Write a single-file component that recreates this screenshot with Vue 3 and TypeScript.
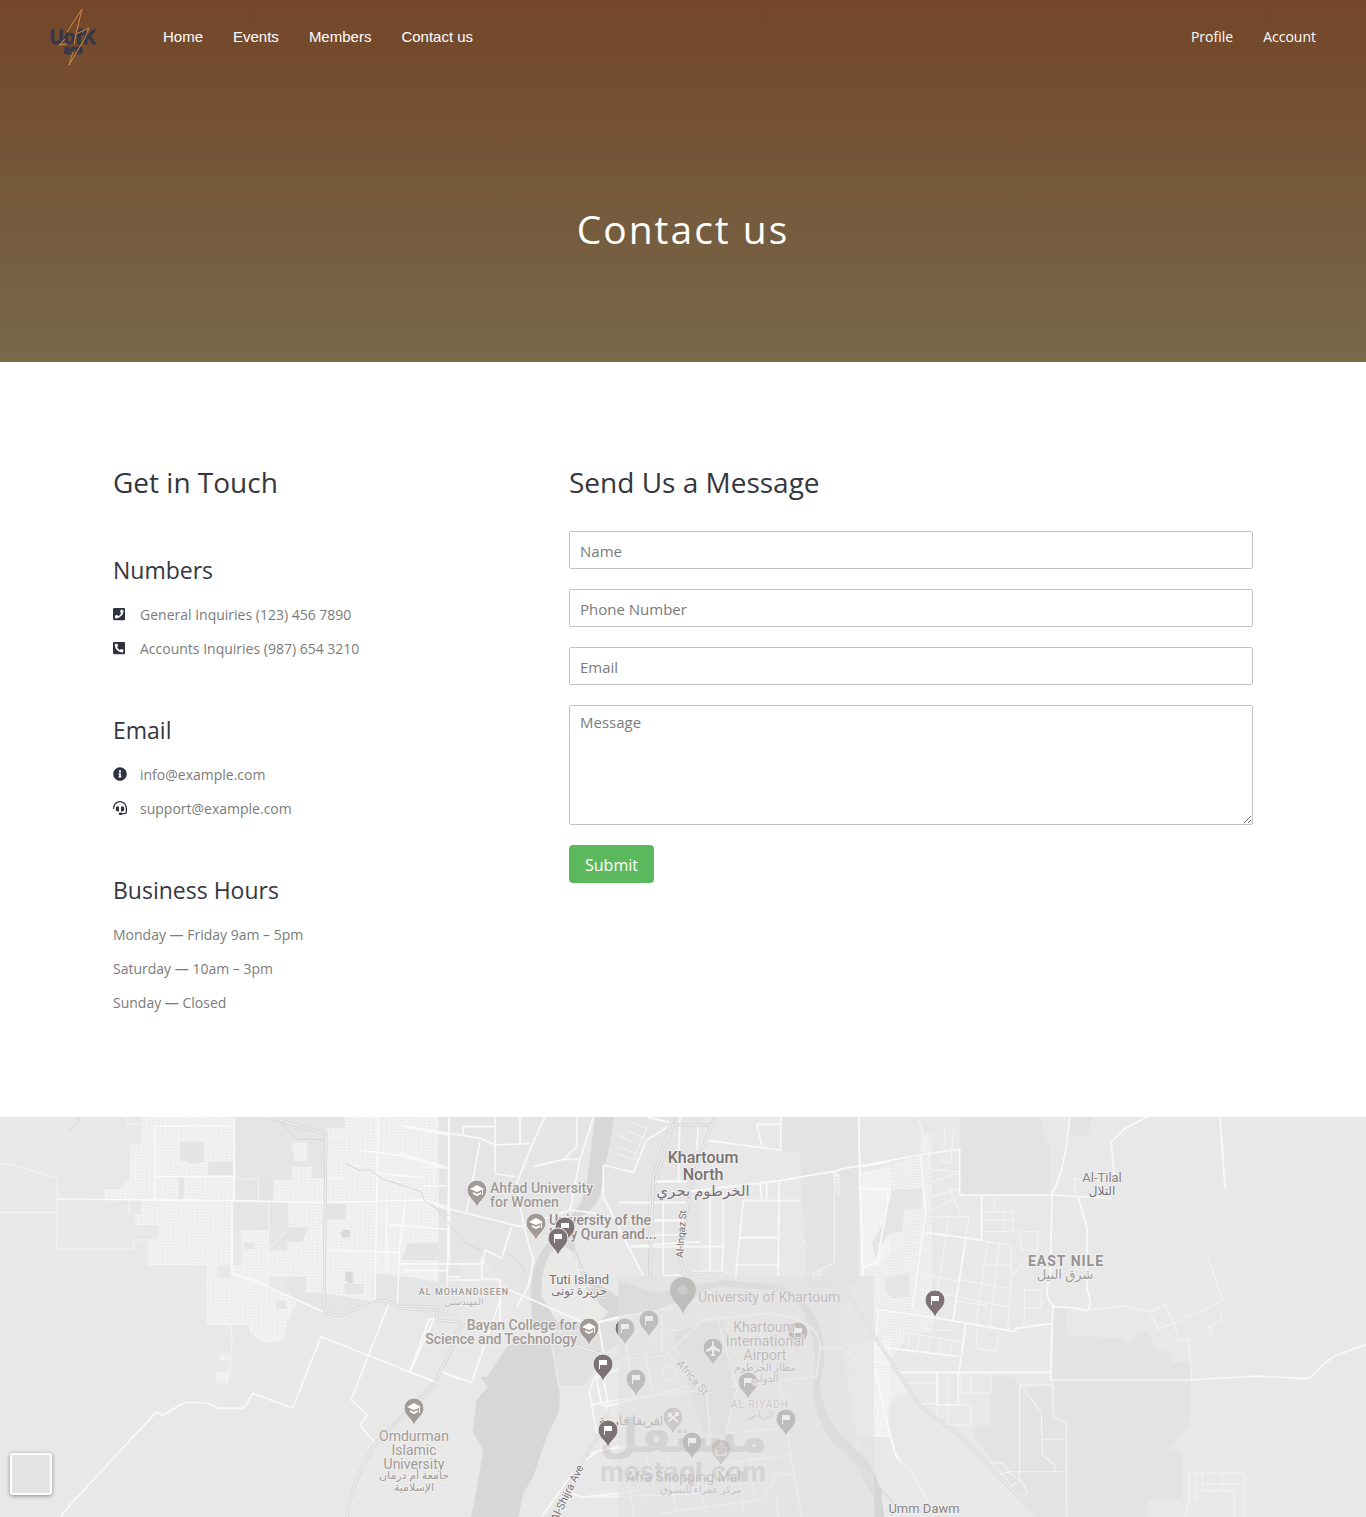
<script setup lang="ts">
import { ref } from 'vue'

interface NavLink { label: string; href: string }
interface ContactLine { icon?: 'phone' | 'phoneAlt' | 'info' | 'headset'; text: string }
interface ContactGroup { title: string; lines: ContactLine[] }
interface Pin { x: number; y: number; kind: 'grad' | 'flag' | 'plane' | 'dining' | 'shop'; color: string }
interface MapLabel {
  text: string; x: number; y: number; size: number; color: string
  anchor?: 'start' | 'middle' | 'end'; weight?: number; rotate?: number; spacing?: number
}

const mainLinks: NavLink[] = [
  { label: 'Home', href: '#home' },
  { label: 'Events', href: '#events' },
  { label: 'Members', href: '#members' },
  { label: 'Contact us', href: '#contact' },
]
const userLinks: NavLink[] = [
  { label: 'Profile', href: '#profile' },
  { label: 'Account', href: '#account' },
]

const groups: ContactGroup[] = [
  {
    title: 'Numbers',
    lines: [
      { icon: 'phone', text: 'General Inquiries (123) 456 7890' },
      { icon: 'phoneAlt', text: 'Accounts Inquiries (987) 654 3210' },
    ],
  },
  {
    title: 'Email',
    lines: [
      { icon: 'info', text: 'info@example.com' },
      { icon: 'headset', text: 'support@example.com' },
    ],
  },
  {
    title: 'Business Hours',
    lines: [
      { text: 'Monday — Friday 9am – 5pm' },
      { text: 'Saturday — 10am – 3pm' },
      { text: 'Sunday — Closed' },
    ],
  },
]

const name = ref('')
const phone = ref('')
const email = ref('')
const message = ref('')

const GRAD = '#a19a96'
const DARK = '#7d7374'

// Pins and labels below the translucent service area overlay
const mutedPins: Pin[] = [
  { x: 625, y: 202, kind: 'flag', color: DARK },
  { x: 649, y: 194, kind: 'flag', color: DARK },
  { x: 636, y: 253, kind: 'flag', color: DARK },
  { x: 692, y: 316, kind: 'flag', color: DARK },
  { x: 786, y: 293, kind: 'flag', color: DARK },
  { x: 798, y: 206, kind: 'flag', color: DARK },
  { x: 748, y: 256, kind: 'flag', color: DARK },
  { x: 713, y: 222, kind: 'plane', color: DARK },
  { x: 673, y: 291, kind: 'dining', color: GRAD },
  { x: 721, y: 323, kind: 'shop', color: GRAD },
]
const pins: Pin[] = [
  { x: 477, y: 64, kind: 'grad', color: GRAD },
  { x: 536, y: 97, kind: 'grad', color: GRAD },
  { x: 589, y: 202, kind: 'grad', color: GRAD },
  { x: 414, y: 282, kind: 'grad', color: GRAD },
  { x: 565, y: 101, kind: 'flag', color: DARK },
  { x: 558, y: 112, kind: 'flag', color: DARK },
  { x: 603, y: 238, kind: 'flag', color: DARK },
  { x: 608, y: 304, kind: 'flag', color: DARK },
  { x: 935, y: 174, kind: 'flag', color: DARK },
]

const mutedLabels: MapLabel[] = [
  { text: 'University of Khartoum', x: 698, y: 185, size: 14, color: DARK },
  { text: 'Khartoum', x: 764, y: 215, size: 14, color: DARK, anchor: 'middle' },
  { text: 'International', x: 765, y: 229, size: 14, color: DARK, anchor: 'middle' },
  { text: 'Airport', x: 765, y: 243, size: 14, color: DARK, anchor: 'middle' },
  { text: 'مطار الخرطوم', x: 765, y: 254, size: 10, color: DARK, anchor: 'middle' },
  { text: 'الدولي', x: 765, y: 265, size: 10, color: DARK, anchor: 'middle' },
  { text: 'Africa St', x: 676, y: 247, size: 11, color: DARK, rotate: 49 },
  { text: 'AL RIYADH', x: 760, y: 291, size: 10, color: GRAD, anchor: 'middle', spacing: 1 },
  { text: 'الرياض', x: 760, y: 301, size: 9, color: GRAD, anchor: 'middle' },
  { text: 'افريقا فارمة', x: 631, y: 308, size: 13, color: DARK, anchor: 'middle' },
  { text: 'Afra Shopping Mall', x: 685, y: 365, size: 14, color: '#8d8583', anchor: 'middle' },
  { text: 'مركز عفراء للتسوق', x: 701, y: 376, size: 10, color: '#8d8583', anchor: 'middle' },
]
const labels: MapLabel[] = [
  { text: 'Khartoum', x: 703, y: 46, size: 16, color: '#787071', anchor: 'middle', weight: 500 },
  { text: 'North', x: 703, y: 63, size: 16, color: '#787071', anchor: 'middle', weight: 500 },
  { text: 'الخرطوم بحري', x: 703, y: 79, size: 15, color: '#787071', anchor: 'middle' },
  { text: 'Ahfad University', x: 490, y: 76, size: 14, color: GRAD, weight: 500 },
  { text: 'for Women', x: 490, y: 90, size: 14, color: GRAD, weight: 500 },
  { text: 'University of the', x: 549, y: 108, size: 14, color: '#938b88', weight: 500 },
  { text: 'Holy Quran and...', x: 549, y: 122, size: 14, color: '#938b88', weight: 500 },
  { text: 'Tuti Island', x: 579, y: 167, size: 13, color: '#787071', anchor: 'middle' },
  { text: 'جزيرة توتى', x: 579, y: 178, size: 12, color: '#787071', anchor: 'middle' },
  { text: 'AL MOHANDISEEN', x: 464, y: 178, size: 9, color: GRAD, anchor: 'middle', weight: 500, spacing: 1 },
  { text: 'المهندسين', x: 464, y: 188, size: 9, color: '#b5afac', anchor: 'middle' },
  { text: 'Bayan College for', x: 577, y: 213, size: 14, color: GRAD, anchor: 'end', weight: 500 },
  { text: 'Science and Technology', x: 577, y: 227, size: 14, color: GRAD, anchor: 'end', weight: 500 },
  { text: 'Omdurman', x: 414, y: 324, size: 14, color: GRAD, anchor: 'middle' },
  { text: 'Islamic', x: 414, y: 338, size: 14, color: GRAD, anchor: 'middle' },
  { text: 'University', x: 414, y: 352, size: 14, color: GRAD, anchor: 'middle' },
  { text: 'جامعة أم درمان', x: 414, y: 362, size: 11, color: GRAD, anchor: 'middle' },
  { text: 'الإسلامية', x: 414, y: 374, size: 11, color: GRAD, anchor: 'middle' },
  { text: 'Al-Inqaz St', x: 683, y: 141, size: 10, color: '#787071', rotate: -86 },
  { text: 'Al-Shijra Ave', x: 557, y: 405, size: 11, color: '#787071', rotate: -64 },
  { text: 'EAST NILE', x: 1066, y: 149, size: 14, color: '#989192', anchor: 'middle', weight: 700, spacing: 1 },
  { text: 'شرق النيل', x: 1065, y: 162, size: 13, color: GRAD, anchor: 'middle' },
  { text: 'Al-Tilal', x: 1102, y: 65, size: 13, color: '#8a8283', anchor: 'middle' },
  { text: 'التلال', x: 1102, y: 78, size: 12, color: '#787071', anchor: 'middle' },
  { text: 'Umm Dawm', x: 924, y: 396, size: 13, color: '#8a8283', anchor: 'middle' },
]
</script>

<template>
  <div class="page">
    <header class="hero">
      <nav class="nav" aria-label="Main">
        <a class="logo" href="#home" aria-label="UofK home">
          <svg viewBox="0 0 60 74" width="60" height="74">
            <g class="logo-text">
              <text x="30" y="44" font-size="19" text-anchor="middle">UofK</text>
              <text x="30" y="54" font-size="12" text-anchor="middle">are</text>
            </g>
            <path d="M39 9L24 32M39 9L33 34L46 28L42 38L26 65L30 52M24 44L16 45L22 39M33 34L31 44" fill="none" stroke="#cf8d43" stroke-width="1" />
          </svg>
        </a>
        <ul class="links">
          <li v-for="l in mainLinks" :key="l.label"><a :href="l.href">{{ l.label }}</a></li>
        </ul>
        <ul class="links user">
          <li v-for="l in userLinks" :key="l.label"><a :href="l.href">{{ l.label }}</a></li>
        </ul>
      </nav>
      <h1>Contact us</h1>
    </header>

    <main class="content">
      <section>
        <h2>Get in Touch</h2>
        <div class="groups">
          <div v-for="g in groups" :key="g.title">
            <h3>{{ g.title }}</h3>
            <ul class="lines">
              <li v-for="line in g.lines" :key="line.text">
                <span v-if="line.icon" class="icon">
                  <svg v-if="line.icon === 'phone'" viewBox="0 0 448 512" height="14"><path d="M400 32H48C21.49 32 0 53.49 0 80v352c0 26.51 21.49 48 48 48h352c26.51 0 48-21.49 48-48V80c0-26.51-21.49-48-48-48zM94 416c-7.033 0-13.057-4.873-14.616-11.627l-14.998-65a15 15 0 0 1 8.707-17.16l69.998-29.999a15 15 0 0 1 17.518 4.289l30.997 37.885c48.944-22.963 88.297-62.858 110.781-110.78l-37.886-30.997a15.001 15.001 0 0 1-4.289-17.518l30-69.998a15 15 0 0 1 17.16-8.707l65 14.998A14.997 14.997 0 0 1 384 126c0 160.292-129.945 290-290 290z" /></svg>
                  <svg v-else-if="line.icon === 'phoneAlt'" viewBox="0 0 448 512" height="14"><path d="M400 32H48A48 48 0 0 0 0 80v352a48 48 0 0 0 48 48h352a48 48 0 0 0 48-48V80a48 48 0 0 0-48-48zm-16.39 307.37l-15 65A15 15 0 0 1 354 416C194 416 64 286.29 64 126a15.7 15.7 0 0 1 11.63-14.61l65-15A18.23 18.23 0 0 1 144 96a16.27 16.27 0 0 1 13.79 9.09l30 70A17.9 17.9 0 0 1 189 181a17 17 0 0 1-5.5 11.61l-37.89 31a231.91 231.91 0 0 0 110.78 110.78l31-37.89A17 17 0 0 1 299 291a17.85 17.85 0 0 1 5.91 1.21l70 30A16.25 16.25 0 0 1 384 336a17.41 17.41 0 0 1-.39 3.37z" /></svg>
                  <svg v-else-if="line.icon === 'info'" viewBox="0 0 512 512" height="14"><path d="M256 8C119.043 8 8 119.083 8 256c0 136.997 111.043 248 248 248s248-111.003 248-248C504 119.083 392.957 8 256 8zm0 110c23.196 0 42 18.804 42 42s-18.804 42-42 42-42-18.804-42-42 18.804-42 42-42zm56 254c0 6.627-5.373 12-12 12h-88c-6.627 0-12-5.373-12-12v-24c0-6.627 5.373-12 12-12h12v-64h-12c-6.627 0-12-5.373-12-12v-24c0-6.627 5.373-12 12-12h64c6.627 0 12 5.373 12 12v100h12c6.627 0 12 5.373 12 12v24z" /></svg>
                  <svg v-else viewBox="0 0 512 512" height="14">
                    <path d="M24 272V256A232 232 0 0 1 488 256V400Q488 464 424 464H300" fill="none" stroke="currentColor" stroke-width="48" stroke-linecap="round" />
                    <path d="M192 192h-16c-44 0-72 28-72 64v64c0 36 28 64 72 64h16c18 0 28-14 28-32V224c0-18-10-32-28-32zM336 384c44 0 72-28 72-64v-64c0-36-28-64-72-64h-16c-18 0-28 14-28 32v128c0 18 10 32 28 32z" />
                    <rect x="208" y="416" width="128" height="96" rx="48" />
                  </svg>
                </span>
                <span>{{ line.text }}</span>
              </li>
            </ul>
          </div>
        </div>
      </section>

      <section>
        <h2>Send Us a Message</h2>
        <form @submit.prevent>
          <input v-model="name" type="text" placeholder="Name" aria-label="Name" />
          <input v-model="phone" type="tel" placeholder="Phone Number" aria-label="Phone Number" />
          <input v-model="email" type="email" placeholder="Email" aria-label="Email" />
          <textarea v-model="message" placeholder="Message" aria-label="Message"></textarea>
          <button class="submit" type="submit">Submit</button>
        </form>
      </section>
    </main>

    <section class="map" aria-label="Map">
      <svg class="map-art" viewBox="0 0 1366 400" preserveAspectRatio="xMidYMid slice">
        <defs>
          <pattern id="blocks" width="14" height="9" patternUnits="userSpaceOnUse" patternTransform="rotate(2)">
            <path d="M0 4H14M7 0V9" stroke="#fafafa" stroke-width="4" opacity=".55" />
          </pattern>
          <pattern id="dense" width="10" height="8" patternUnits="userSpaceOnUse" patternTransform="rotate(4)">
            <path d="M0 4H10M5 0V8" stroke="#fafafa" stroke-width="3" opacity=".6" />
          </pattern>
          <g id="pin">
            <path d="M0 27 C-2 19 -10 17 -10 9 A10 10 0 0 1 10 9 C10 17 2 19 0 27Z" stroke="#f1f1f1" stroke-width="1" />
          </g>
        </defs>

        <g transform="scale(.33333)">
          <rect width="4098" height="1200" fill="#e8e8e8" />

          <!-- west bank -->
          <g transform="translate(0 -21)">
            <path d="M705 21H975V600L885 575L806 420V362H700V270H705ZM1120 490H1345V590H1190L1120 570ZM980 21H1380V620H1310L1200 590L1120 570L975 620Z" fill="#e5e5e5" />
            <path d="M426 21H703V270H696V466H445V390H474V345H405V312H425V270H313V238H360L390 205V103H426ZM725 360H804V422H862V396H905V352H865V275H820V210H875V170H935V205H972V548H918V500H806V530L890 575L862 640L850 690L800 695L752 672L745 646H622V466H650V504H692V466H725ZM871 98H922V153H885ZM980 55H1034V21H1316V516L1220 500L1120 490V575L975 550ZM648 785H686V820H648ZM657 730H690V750H657Z" fill="#ebebeb" />
            <path d="M426 21H703V270H696V466H445V390H474V345H405V312H425V270H313V238H360L390 205V103H426ZM725 360H804V422H862V396H905V352H865V275H820V210H875V170H935V205H972V548H918V500H806V530L890 575L862 640L850 690L800 695L752 672L745 646H622V466H650V504H692V466H725ZM871 98H922V153H885ZM980 55H1034V21H1316V516L1220 500L1120 490V575L975 550ZM648 785H686V820H648ZM657 730H690V750H657Z" fill="url(#blocks)" />
            <path d="M540 95H612V155L575 162L540 150ZM535 198H552V267H535ZM732 398H764V417H732ZM866 355L925 352L905 396H862L830 400ZM980 280H1037V328H980ZM1034 522H1090V552H1034ZM785 212H816V270H785ZM828 572H858V596H828ZM625 155H700V196H625ZM1225 400H1316V450H1205Z" fill="#e4e4e4" />
            <path d="M1036 485H1058V520H1045L1036 510ZM1020 370L1036 358L1050 362V382L1030 384Z" fill="#d9d9d9" />
            <path d="M0 160L40 165L172 205V345L169 418H401V390H474M0 308H169M383 21V43H426M703 200L725 207L775 208M775 208V270M806 275V420M806 418L870 355M700 498L780 520M692 646L697 690L687 800M750 650Q755 690 820 696Q850 690 852 660M388 270V312M445 390V463H622M622 466V642H745M984 80H1034" class="thin" />
            <path d="M172 267L696 272L980 278L1270 270L1380 300M703 21V272M696 272V490M465 48V268M465 48H703M465 199L703 200M696 490L760 510L970 605M1134 21L1125 570M1348 21L1342 535M980 205H1034M980 420L1200 428M1080 122L1180 132L1340 175M1215 50L1380 82M1216 270L1198 430L1192 585M1160 278V480M1165 343L1340 358M1198 462H1380M1205 482H1342M1134 190L1270 203M1270 228H1340M1342 255L1380 262M1342 500H1380M1165 585L1053 870L1102 915L1080 945L1127 1000M963 680L1305 815M963 680L878 894L758 850Q735 895 725 895H655L630 882Q560 870 540 885L486 917L470 905L210 1185L182 1221M1305 628H1288L1230 782M1323 785L1380 808" class="road" />
            <path d="M207 62Q240 40 237 21M1036 160L1075 180H1110L1150 208L1230 233L1262 245L1275 275L1350 320L1380 360M840 35L890 88H975" class="river" />
            <path d="M805 21L978 72L972 600Q1010 630 1045 605L1140 572Q1165 570 1190 588L1310 592V630L1380 636L1350 730L1305 815L1180 945L1127 1000Q1060 1100 1040 1221" class="hw" />
            <path d="M805 21L978 72L972 600Q1010 630 1045 605L1140 572Q1165 570 1190 588L1310 592V630L1380 636L1350 730L1305 815L1180 945L1127 1000Q1060 1100 1040 1221" class="hw-in" />
          </g>

          <!-- river confluence -->
          <g transform="translate(1200 -21)">
            <path d="M148 21H580L510 300L390 450L395 560L330 540L250 440L148 455ZM640 21H900V500H730L610 260V160Z" fill="#e5e5e5" />
            <path d="M585 21H642Q630 110 615 165L600 260Q575 310 535 320Q510 390 535 440Q560 510 610 530L655 560V620L560 660H400Q385 540 402 475Q410 440 450 390L510 320Q550 285 560 220Z" fill="#d7d7d7" />
            <path d="M455 425Q495 395 520 430L570 560L625 605L600 635H470L425 560Q420 470 455 425Z" fill="#e9e9e7" />
            <path d="M520 420L560 520L600 590M530 450L545 560L590 600M540 480H560M545 530H580" class="thin" />
            <path d="M148 21V460M0 45L240 85L285 105L390 100M190 50H285M190 50V75M285 21V190M240 95L200 305M435 21Q400 90 370 170L350 220L370 345L400 450L385 530L350 590M360 21V100M490 148L530 110V21M580 21L540 150L510 300M400 170L490 148H535M285 192L345 200M0 130L140 172H60M100 285L360 350L510 300L590 310M0 462H250L255 420L305 445L335 350M245 440L245 505L300 510V660M330 540L600 660M148 510H245M610 165L705 188M610 165V260L730 498M700 188L740 90L820 40L740 21M655 278H760M755 213H840M755 330H850M690 408L900 395M790 498L840 495" class="road" />
            <path d="M100 285L170 370Q200 410 245 420M320 430Q350 440 380 490" class="river" />
            <path d="M825 21L750 270V500M0 595L110 600" class="hw" />
            <path d="M825 21L750 270V500M0 595L110 600" class="hw-in" />
            <path d="M650 75L700 95M680 60L735 85M655 110L710 130M700 40L740 55L700 150L650 130" class="thin" />
          </g>

          <!-- white nile -->
          <g transform="translate(1200 549)">
            <path d="M320 140L410 110L452 130L480 290L475 340L440 410L400 530L370 580L355 651H213L230 570L250 450L218 395L230 300L262 262L242 230H262Z" fill="#d7d7d7" />
            <path d="M450 100L660 60V130L610 160L555 255L480 255Z" fill="#e0e0e0" />
            <path d="M300 0L280 60L215 248L122 213M0 205L105 245M100 60L32 212M595 65L615 185L580 240L568 275L590 400M590 235L605 315H625L610 235M615 320L900 250M590 235L660 205M600 65L900 0M540 490L600 450L700 440M505 575L545 592L700 575L760 500M540 490L425 651M620 320V345" class="road" />
            <path d="M0 360L100 260L190 70M500 130L670 180L820 160L900 250M625 330L600 400L500 560L450 651" class="hw" />
            <path d="M0 360L100 260L190 70M500 130L670 180L820 160L900 250M625 330L600 400L500 560L450 651" class="hw-in" />
          </g>

          <!-- khartoum north -->
          <g transform="translate(1770 -21)">
            <path d="M575 21H805V520H650L630 130L575 120Z" fill="#e3e3e3" />
            <path d="M730 190L775 230L770 265L740 255ZM815 185L900 175V430L870 465L818 475ZM665 490L700 478L695 510H665Z" fill="url(#dense)" />
            <path d="M355 92L572 120V21M500 43H572M500 43L515 105M270 21L265 215M325 50L320 120M195 215H290M120 278H290M220 280V495M190 332H290M190 375H270M120 410H400M400 245V410L395 500M360 250V500M290 245L570 212L900 155M567 212L565 500M460 272H630M460 272L435 520M510 220L515 270M530 215V268M450 383H565M443 465H565M805 21L808 170L818 500M725 185L810 238H900M818 475L865 455L895 300L890 240M270 500L310 485H400L435 520" class="road" />
            <path d="M733 195V460L665 490M640 385L650 410" class="thin" />
            <path d="M250 21L190 200L180 520M375 21L345 95L300 240L270 440L285 500M250 45H365M150 500L200 530L205 620M280 490H400L440 525L720 525L850 500" class="hw" />
            <path d="M250 21L190 200L180 520M375 21L345 95L300 240L270 440L285 500M250 45H365M150 500L200 530L205 620M280 490H400L440 525L720 525L850 500" class="hw-in" />
          </g>

          <!-- city centre and blue nile -->
          <g transform="translate(1770 549)">
            <path d="M85 -60L200 -20L400 -60L560 -45Q650 -20 690 80Q715 180 690 240Q690 320 740 390L830 480Q870 530 882 651H862Q855 560 800 490L720 420Q660 320 672 240Q685 140 650 60Q620 -20 540 -30L380 -40L200 30L85 50Z" fill="#d0d0d0" />
            <path d="M250 100L330 70L400 60L440 270L400 400H340Z" fill="#dcdcdc" />
            <path d="M780 120H900V410H800L780 300ZM800 420L830 460L780 440Z" fill="url(#blocks)" />
            <path d="M0 75L85 50L280 20M105 100L130 300M165 150L190 290M85 180L230 165L340 60L540 40Q690 60 690 140L680 230L420 260M235 165L350 280L360 400M0 315L80 300L340 270M385 60L440 270L410 390M410 400L560 385M570 250L600 450L635 651M400 490L600 465M85 590L340 580L390 480M0 590H85M210 640L420 610L520 600L560 520L610 525M690 145H760L800 180L900 190M110 480L130 651M170 470L190 560M230 460L260 640M300 450L350 640M440 480L460 640M480 470L495 600M0 460L80 440H360M215 40V160M225 90H270M560 580L565 651M240 200a22 22 0 1 0 1 0M190 270V290" class="road" />
          </g>

          <!-- east nile -->
          <g transform="translate(2520 -21) scale(1.0064 1)">
            <path d="M0 21H55V495H0ZM357 21H595L627 120V255H357ZM680 21H753L740 75L680 82ZM635 590H670L680 675L835 685L860 705L880 670L920 668L935 710L985 730L990 757H1045V810L1040 950L980 1018L1018 1025V1168H920V1221H680L675 940L635 920ZM450 800H520L540 840L627 825L635 920L675 940V1221H590L400 980V950H450Z" fill="#e3e3e3" />
            <path d="M68 190L195 150L240 137V70H272L275 670L205 660L180 715L140 770L180 780L205 850L165 860L135 905L150 980H100L50 970L30 880L10 720L0 600L60 500L65 240Z" fill="url(#dense)" />
            <path d="M152 240L245 235V290L190 300L185 365L150 370L125 400L110 460L95 400L130 340ZM140 500L208 488V560L160 565L135 545Z" fill="#e5e5e5" />
            <path d="M232 21L250 80V130M310 45L315 100L300 120M340 45L330 160L300 150M270 180L357 185M275 215L350 190M275 260L357 235M270 305L370 250M275 320L385 320M325 235L360 315M385 320L375 380M420 305H515V365H425M460 255V305M490 305V360M425 330H515M325 320L275 640M375 385L510 405M440 395L405 640M475 400L445 660M510 405V500L500 660M535 365H590V420H540ZM415 465H510M360 510L500 535M270 495L355 515M280 545L500 590M350 575L440 585M410 650L405 715L465 725L475 665M510 500L555 450H600M550 540H600V595H550ZM550 600L548 650M180 655L175 715M210 665L200 720M240 670L230 725M270 680L260 730M300 690L295 735M335 695L325 738M290 660H330M180 665L360 695M190 820H290V880L230 883M290 790V925M322 795V945M322 885H390V945H322M362 795V850H450V795M390 800V850M535 825L600 905L603 1035L640 1065V1085M535 825H630M535 825V1110L500 1085H675M603 988H670M635 810V920L675 940V1221M1095 437L1142 572L995 640L948 657L922 605L970 585L995 640L1010 690H1040L1048 810M740 600L850 587L922 605M1040 1090H1205V1221M1040 1090V1168H1062V1090M1080 1090V1142H1175V1221M1140 1090V1142M1080 1122H1200M1040 1168L1030 1221M700 205V250M720 210L700 205M1080 665L1070 670M1135 610L1138 630L1100 650L1110 675M445 1060L485 1058L505 1085L470 1095M510 1130L540 1110L560 1150L540 1160M135 905L165 1040L220 1095L270 1190" class="thin" />
            <path d="M55 21L68 470L110 455L150 240M0 178L240 135L357 117V255H630L810 265M240 135L255 310L215 600M60 237H150M685 21Q670 190 632 250L627 500Q605 560 635 585L627 810H1045L1240 798L1370 805H1400Q1460 740 1490 732L1578 700M915 21L850 55L808 97L818 195M1133 21L1148 235M710 262L737 355V540Q755 590 735 602Q690 590 635 590M255 367L422 390V255M375 385L337 630M102 597L265 620L520 665L525 655L635 640M375 640L355 787M110 710L355 740M175 787H627M290 790V885H353V787M150 980L100 760L115 600M100 978H150L165 1030L180 1055" class="road" />
            <path d="M115 1130L155 1175V1221" class="river" />
            <path d="M0 520L60 610L110 690L240 890L360 980L590 1221" class="hw" />
            <path d="M0 520L60 610L110 690L240 890L360 980L590 1221" class="hw-in" />
            <path d="M0 985L60 1060L105 1110L125 1140V1221H102V1170L50 1070L0 1010Z" fill="#d6d6d6" />
          </g>
        </g>

        <g>
          <path d="M683 197 C680 187 670 183 670 173 A13 13 0 0 1 696 173 C696 183 686 187 683 197Z" :fill="DARK" />
          <circle cx="683" cy="173" r="5" fill="#a09899" />
          <g v-for="p in mutedPins" :key="`${p.x}-${p.y}`" :transform="`translate(${p.x} ${p.y})`" :fill="p.color">
            <use href="#pin" />
            <path v-if="p.kind === 'flag'" d="M-4 5H4V10H-3V14H-4Z" fill="#fff" />
            <path v-else-if="p.kind === 'plane'" d="M-1 3Q0 1 1 3V7L7 11V13L1 11V15L3 17H-3L-1 15V11L-7 13V11L-1 7Z" fill="#fff" />
            <path v-else-if="p.kind === 'dining'" d="M-5 5L5 14M5 5L-5 14M-5 9L-1 5M2 5H5V8" fill="none" stroke="#fff" stroke-width="2" />
            <path v-else d="M-5 7H5V15H-5ZM-2 7Q0 1 2 7M-3 12L0 9L3 12" fill="none" stroke="#fff" />
          </g>
          <text v-for="l in mutedLabels" :key="l.text" class="label" :transform="`translate(${l.x} ${l.y}) rotate(${l.rotate ?? 0})`" :font-size="l.size" :fill="l.color" :text-anchor="l.anchor ?? 'start'" :font-weight="l.weight ?? 400" :style="{ letterSpacing: `${l.spacing ?? 0}px` }">{{ l.text }}</text>
        </g>

        <rect x="618" y="159" width="256" height="241" fill="#e2e2e2" opacity=".66" />

        <g class="brand">
          <text x="683" y="335" font-size="46" text-anchor="middle">مستقل</text>
          <text x="683" y="364" font-size="26" text-anchor="middle">mostaql.com</text>
        </g>

        <text v-for="l in labels" :key="l.text" class="label" :transform="`translate(${l.x} ${l.y}) rotate(${l.rotate ?? 0})`" :font-size="l.size" :fill="l.color" :text-anchor="l.anchor ?? 'start'" :font-weight="l.weight ?? 400" :style="{ letterSpacing: `${l.spacing ?? 0}px` }">{{ l.text }}</text>
        <g v-for="p in pins" :key="`${p.x}-${p.y}`" :transform="`translate(${p.x} ${p.y})`" :fill="p.color">
          <use href="#pin" />
          <path v-if="p.kind === 'flag'" d="M-4 5H4V10H-3V14H-4Z" fill="#fff" />
          <path v-else d="M-7 8L0 4L7 8L0 11ZM-4 11L0 13L4 11V13L0 15L-4 13ZM5 9H6V14H5Z" fill="#fff" />
        </g>
      </svg>
      <button class="map-toggle" type="button" aria-label="Change map view"></button>
    </section>
  </div>
</template>

<style>
body {
  margin: 0;
  background: #fff;
}
</style>

<style scoped>
.page {
  font-family: "Open Sans", "Noto Sans", sans-serif;
  color: #343640;
}
.page * {
  box-sizing: border-box;
}
ul {
  list-style: none;
  margin: 0;
  padding: 0;
}
h1, h2, h3 {
  margin: 0;
  font-weight: 400;
}
.hero {
  height: 362px;
  background: linear-gradient(#744629, #77694a);
  color: #fff;
}
.nav {
  display: flex;
  align-items: center;
  height: 74px;
  padding: 0 50px 0 43px;
}
.logo {
  width: 60px;
  height: 74px;
  margin-right: 60px;
}
.logo svg {
  display: block;
}
.logo-text {
  font-family: "Inter", "Liberation Sans", sans-serif;
  font-weight: 600;
  fill: #36384a;
  stroke: #36384a;
  stroke-width: 1px;
  stroke-linejoin: round;
}
.links {
  display: flex;
  gap: 30px;
  font: 15px/20px "Liberation Sans", Arial, sans-serif;
}
.links a {
  color: #fff;
  text-decoration: none;
}
.user {
  margin-left: auto;
  font: 14px/20px "Open Sans", sans-serif;
}
h1 {
  padding-top: 129px;
  font-size: 39px;
  line-height: 52px;
  letter-spacing: 2px;
  text-align: center;
}
.content {
  display: grid;
  grid-template-columns: 2fr 3fr;
  max-width: 1140px;
  margin: 0 auto;
  padding: 100px 0 98px;
}
h2 {
  margin-bottom: 29px;
  font-size: 28px;
  line-height: 40px;
}
h3 {
  margin-bottom: 11px;
  font-size: 23px;
  line-height: 32px;
}
.groups {
  display: flex;
  flex-direction: column;
  gap: 49px;
  padding-top: 23px;
}
.lines li {
  display: flex;
  align-items: center;
  height: 34px;
  font-size: 14px;
  color: #7b7b7b;
}
.icon {
  display: flex;
  width: 27px;
  color: #2f3240;
}
.icon svg {
  display: block;
  fill: currentColor;
}
form {
  display: flex;
  flex-direction: column;
  gap: 20px;
}
input, textarea {
  display: block;
  width: 100%;
  height: 38px;
  margin: 0;
  padding: 2px 10px 0;
  border: 1px solid #c3c3c3;
  border-radius: 2px;
  background: #fff;
  color: #343640;
  font: 15px/22px "Open Sans", sans-serif;
}
textarea {
  height: 120px;
  padding-top: 5px;
  resize: vertical;
}
input::placeholder, textarea::placeholder {
  color: #7b7b7b;
}
.submit {
  align-self: flex-start;
  height: 38px;
  padding: 2px 16px 0;
  border: 0;
  border-radius: 4px;
  background: #5cb85c;
  color: #fff;
  font: 16px/36px "Open Sans", sans-serif;
}
.map {
  position: relative;
  height: 400px;
  overflow: hidden;
  background: #e8e8e8;
}
.map-art {
  display: block;
  width: 100%;
  height: 100%;
}
.map-art path.thin, .map-art path.road, .map-art path.river, .map-art path.hw, .map-art path.hw-in {
  fill: none;
  stroke-linejoin: round;
}
.thin { stroke: #f4f4f4; stroke-width: 3; }
.road { stroke: #f9f9f9; stroke-width: 5; }
.river { stroke: #d6d6d6; stroke-width: 3; }
.hw { stroke: #d3d3d3; stroke-width: 9; }
.hw-in { stroke: #ececec; stroke-width: 5; }
.label {
  font-family: Roboto, "DejaVu Sans", sans-serif;
  stroke: #f0f0f0;
  stroke-width: 2px;
  stroke-linejoin: round;
  paint-order: stroke;
}
.brand {
  font-family: Inter, "DejaVu Sans", sans-serif;
  font-weight: 700;
  fill: #b8b8b8;
  opacity: .38;
}
.map-toggle {
  position: absolute;
  left: 10px;
  bottom: 22px;
  width: 42px;
  height: 42px;
  border: 2px solid #fff;
  border-radius: 3px;
  background: #e4e4e4;
  box-shadow: 0 1px 4px rgba(0, 0, 0, .4);
}
</style>
